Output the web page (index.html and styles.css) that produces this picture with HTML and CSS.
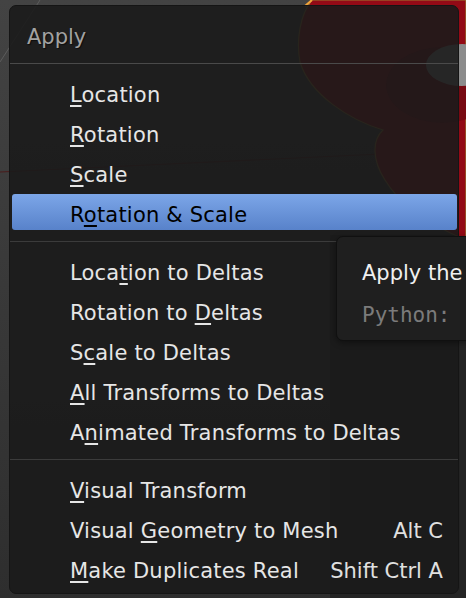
FILE: index.html
```html
<!DOCTYPE html>
<html>
<head>
<meta charset="utf-8">
<link rel="stylesheet" href="styles.css">
</head>
<body>
<svg class="scene" width="466" height="598" viewBox="0 0 466 598" aria-hidden="true">
  <defs>
    <linearGradient id="bg" x1="0" y1="0" x2="0" y2="1">
      <stop offset="0" stop-color="#434343"/>
      <stop offset="1" stop-color="#2e2e2e"/>
    </linearGradient>
  </defs>
  <rect width="466" height="598" fill="url(#bg)"/>
  <rect x="330" y="235" width="136" height="363" fill="#242424"/>
  <line x1="40" y1="0" x2="0" y2="62" stroke="#5c5c5c" stroke-width="1"/>
  <line x1="0" y1="172" x2="466" y2="150" stroke="#4a1c1c" stroke-width="1.2"/>
  <path d="M312 0 C300 15 296 40 300 62 C310 95 350 120 383 130 C372 140 372 160 385 180 C400 205 430 225 466 240 L466 0 Z" fill="#930a16" stroke="#9a7a30" stroke-width="1.2"/>
  <ellipse cx="442" cy="85" rx="56" ry="38" fill="#780912"/>
  <ellipse cx="462" cy="65" rx="36" ry="21" fill="#8c8c8c"/>
  <line x1="305" y1="6" x2="312" y2="0" stroke="#f2a33a" stroke-width="2"/>
</svg>

<div class="menu">
  <div class="menu-title">Apply</div>
  <div class="sep sep-title"></div>
  <div class="group">
    <div class="item"><span class="label"><u>L</u>ocation</span></div>
    <div class="item"><span class="label"><u>R</u>otation</span></div>
    <div class="item"><span class="label"><u>S</u>cale</span></div>
    <div class="item active"><span class="label">R<u>o</u>tation &amp; Scale</span></div>
  </div>
  <div class="sep"></div>
  <div class="group">
    <div class="item"><span class="label">Loca<u>t</u>ion to Deltas</span></div>
    <div class="item"><span class="label">Rotation to <u>D</u>eltas</span></div>
    <div class="item"><span class="label">S<u>c</u>ale to Deltas</span></div>
    <div class="item"><span class="label"><u>A</u>ll Transforms to Deltas</span></div>
    <div class="item"><span class="label">A<u>n</u>imated Transforms to Deltas</span></div>
  </div>
  <div class="sep"></div>
  <div class="group group-last">
    <div class="item"><span class="label"><u>V</u>isual Transform</span></div>
    <div class="item"><span class="label">Visual <u>G</u>eometry to Mesh</span><span class="shortcut">Alt C</span></div>
    <div class="item"><span class="label"><u>M</u>ake Duplicates Real</span><span class="shortcut">Shift Ctrl A</span></div>
  </div>
</div>

<div class="tooltip">
  <div class="tip-text">Apply the</div>
  <div class="tip-python">Python:</div>
</div>
</body>
</html>
```

FILE: styles.css
```css
html, body {
  margin: 0;
  padding: 0;
}

body {
  width: 466px;
  height: 598px;
  overflow: hidden;
  position: relative;
  background: #383838;
  font-family: "DejaVu Sans", "Noto Sans", sans-serif;
  font-size: 21px;
}

.scene {
  position: absolute;
  left: 0;
  top: 0;
}

.menu {
  position: relative;
  margin: 5px 0 0 9px;
  width: 450px;
  box-sizing: border-box;
  border: 1px solid #151515;
  border-radius: 7px;
  background: rgba(26, 26, 26, 0.89);
  display: flex;
  flex-direction: column;
}

.menu-title {
  height: 57px;
  box-sizing: border-box;
  padding: 4px 0 0 17px;
  display: flex;
  align-items: center;
  color: #a2a2a2;
  text-shadow: 1px 1px 1px rgba(0, 0, 0, 0.6);
}

.sep {
  height: 1px;
  background: #3b3b3b;
}

.sep-title {
  background: #4a4a4a;
}

.group {
  display: flex;
  flex-direction: column;
  gap: 4px;
  padding: 10px 0 11px;
}

.group-last {
  padding-bottom: 7px;
}

.item {
  height: 36px;
  box-sizing: border-box;
  margin: 0 1px 0 2px;
  padding: 5px 14px 0 58px;
  display: flex;
  align-items: center;
  justify-content: space-between;
  color: #e6e6e6;
  white-space: nowrap;
  border-radius: 3px;
}

.label {
  letter-spacing: 0.2px;
}

.item u {
  text-decoration: underline;
  text-decoration-thickness: 2px;
  text-underline-offset: 3px;
}

.item.active {
  background: linear-gradient(to bottom, #7ca6e8, #5882ca);
  color: #000;
}

.shortcut {
  color: #e0e0e0;
}

.tooltip {
  position: absolute;
  left: 336px;
  top: 236px;
  width: 140px;
  height: 105px;
  box-sizing: border-box;
  border: 1px solid #101010;
  border-radius: 7px;
  background: #1f1f1f;
  padding: 12px 0 0 25px;
  box-shadow: 0 2px 6px rgba(0, 0, 0, 0.4);
  white-space: nowrap;
}

.tip-text {
  color: #f0f0f0;
  height: 49px;
  line-height: 48px;
}

.tip-python {
  font-family: "DejaVu Sans Mono", "Liberation Mono", monospace;
  color: #7b7b7b;
  line-height: 34px;
}
```
